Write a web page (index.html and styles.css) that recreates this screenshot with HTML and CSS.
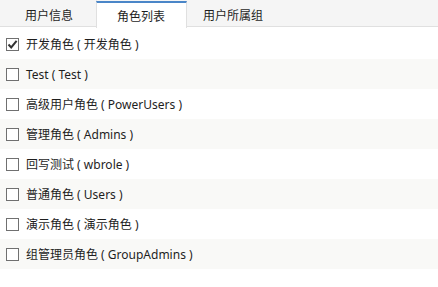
FILE: index.html
```html
<!DOCTYPE html>
<html lang="zh-CN">
<head>
  <meta charset="utf-8">
  <title>角色列表</title>
  <link rel="stylesheet" href="styles.css">
</head>
<body>

  <div class="tabs">
    <div class="tab tab-first">用户信息</div>
    <div class="tab tab-active">角色列表</div>
    <div class="tab tab-last">用户所属组</div>
  </div>

  <div class="roles">
    <div class="role">
      <span class="box checked">
        <svg width="11" height="11" viewBox="0 0 11 11"><path d="M1.5 5.5 L4.2 8.4 L9.6 1.8" fill="none" stroke="#333" stroke-width="2"/></svg>
      </span>
      <span class="name">开发角色 ( 开发角色 )</span>
    </div>
    <div class="role"><span class="box"></span><span class="name">Test ( Test )</span></div>
    <div class="role"><span class="box"></span><span class="name">高级用户角色 ( PowerUsers )</span></div>
    <div class="role"><span class="box"></span><span class="name">管理角色 ( Admins )</span></div>
    <div class="role"><span class="box"></span><span class="name">回写测试 ( wbrole )</span></div>
    <div class="role"><span class="box"></span><span class="name">普通角色 ( Users )</span></div>
    <div class="role"><span class="box"></span><span class="name">演示角色 ( 演示角色 )</span></div>
    <div class="role"><span class="box"></span><span class="name">组管理员角色 ( GroupAdmins )</span></div>
  </div>

</body>
</html>
```

FILE: styles.css
```css
html, body {
    margin: 0;
    padding: 0;
    background: #fff;
}

body {
    font-family: "Noto Sans", "Noto Sans CJK SC", sans-serif;
    font-size: 12px;
    color: #1e1e1e;
}

.tabs {
    display: flex;
    height: 26px;
    background: #f5f5f5;
    border-bottom: 1px solid #e0e0e0;
}

.tab {
    display: flex;
    align-items: center;
    padding: 0 21px 0 20px;
    height: 26px;
    box-sizing: border-box;
    padding-top: 3px;
}

.tab-first {
    padding-left: 25px;
    padding-right: 23px;
    border-right: 1px solid #e6e6e6;
}

.tab-last {
    padding-left: 16px;
}

.tab-active {
    background: #fff;
    height: 27px;
    margin-top: 1px;
    border-top: 2px solid #4a86c8;
    border-left: 1px solid #e0e0e0;
    border-right: 1px solid #e0e0e0;
    padding-top: 1px;
    margin-left: -1px;
}

.roles {
    padding-top: 2px;
}

.role {
    display: flex;
    align-items: center;
    height: 30px;
    padding-left: 6px;
}

.role:nth-child(even) {
    background: #f9f9f7;
}

.box {
    width: 13px;
    height: 13px;
    box-sizing: border-box;
    border: 1px solid #707070;
    background: #fff;
    margin-right: 7px;
    display: flex;
    align-items: center;
    justify-content: center;
}

.box svg {
    display: block;
}

.name {
    line-height: 1;
    padding-top: 2px;
}
```
